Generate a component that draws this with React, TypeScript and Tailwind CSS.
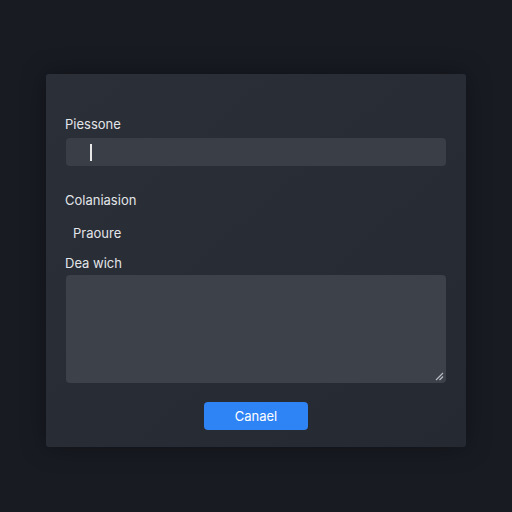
export default function App() {
  return (
    <div className="w-[512px] h-[512px] bg-[#181b22] flex items-start justify-center pt-[74px]" style={{ fontFamily: 'Inter, "Noto Sans", sans-serif' }}>
      <div className="w-[420px] h-[373px] rounded-[3px] bg-gradient-to-br from-[#2a2f38] to-[#252932] px-[20px] pt-[42px] flex flex-col shadow-[0_0_24px_rgba(0,0,0,0.35)]">
        <div className="text-[13px] leading-[16px] text-[#e3e5e9] -ml-[1px]">Piessone</div>
        <div className="mt-[6px] h-[28px] rounded-[4px] bg-[#3a3e47] flex items-center pl-[24px]">
          <div className="w-[1.5px] h-[17px] bg-[#e8e8e8]" />
        </div>
        <div className="mt-[26px] text-[13px] leading-[16px] text-[#e3e5e9] -ml-[1px]">Colaniasion</div>
        <div className="mt-[17px] text-[13px] leading-[16px] text-[#e3e5e9] ml-[7px]">Praoure</div>
        <div className="mt-[14px] text-[13px] leading-[16px] text-[#e3e5e9] -ml-[1px]">Dea wich</div>
        <div className="mt-[4px] h-[108px] rounded-[4px] bg-[#3d414a] relative">
          <svg className="absolute right-[2px] bottom-[2px]" width="9" height="9" viewBox="0 0 9 9">
            <path d="M8 1 L1 8 M8 4.5 L4.5 8" stroke="#b8bcc4" strokeWidth="1.2" />
          </svg>
        </div>
        <div className="mt-[19px] flex justify-center">
          <button className="w-[104px] h-[28px] rounded-[4px] bg-[#2f84f5] text-white text-[13px] leading-[16px]">Canael</button>
        </div>
      </div>
    </div>
  );
}
